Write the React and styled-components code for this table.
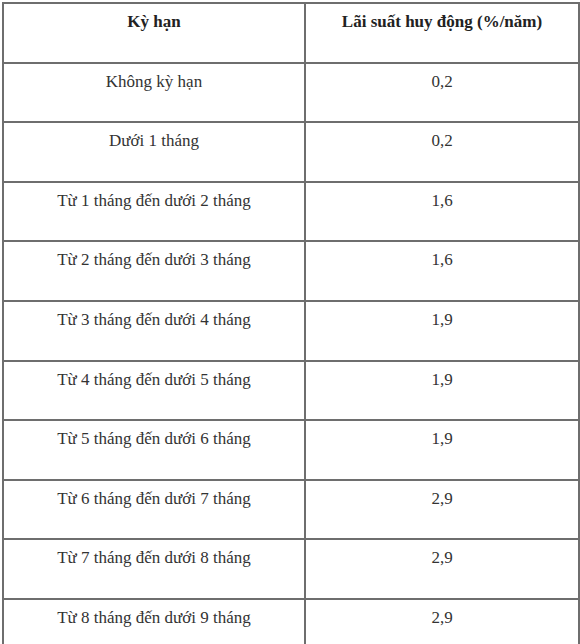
import React from 'react';
import styled, { createGlobalStyle } from 'styled-components';

const GlobalStyle = createGlobalStyle`
    html, body {
        margin: 0;
        padding: 0;
        background: #fff;
        overflow: hidden;
    }
`

const Page = styled.div`
    padding: 2px 0 0 2px;
    width: 580px;
    height: 644px;
    box-sizing: border-box;
    overflow: hidden;
`

const Table = styled.table`
    width: 576px;
    border-collapse: collapse;
    table-layout: fixed;
    font-family: "Liberation Serif", "Times New Roman", serif;
    font-size: 17px;
    color: #333;
`

const Cell = styled.td`
    border: 2px solid #6e6e6e;
    height: 59.6px;
    box-sizing: border-box;
    padding: 8px 4px 0;
    vertical-align: top;
    text-align: center;
    line-height: 20px;
    font-weight: ${p => (p.$head ? 700 : 400)};
    color: ${p => (p.$head ? '#222' : '#333')};
`

const rates = [
    { term: 'Không kỳ hạn', rate: '0,2' },
    { term: 'Dưới 1 tháng', rate: '0,2' },
    { term: 'Từ 1 tháng đến dưới 2 tháng', rate: '1,6' },
    { term: 'Từ 2 tháng đến dưới 3 tháng', rate: '1,6' },
    { term: 'Từ 3 tháng đến dưới 4 tháng', rate: '1,9' },
    { term: 'Từ 4 tháng đến dưới 5 tháng', rate: '1,9' },
    { term: 'Từ 5 tháng đến dưới 6 tháng', rate: '1,9' },
    { term: 'Từ 6 tháng đến dưới 7 tháng', rate: '2,9' },
    { term: 'Từ 7 tháng đến dưới 8 tháng', rate: '2,9' },
    { term: 'Từ 8 tháng đến dưới 9 tháng', rate: '2,9' },
]

function App() {
    return (
        <Page>
            <GlobalStyle/>
            <Table>
                <colgroup>
                    <col style={{ width: '302px' }}/>
                    <col style={{ width: '274px' }}/>
                </colgroup>
                <thead>
                    <tr>
                        <Cell as="th" $head>Kỳ hạn</Cell>
                        <Cell as="th" $head>Lãi suất huy động (%/năm)</Cell>
                    </tr>
                </thead>
                <tbody>
                    {rates.map(r => (
                        <tr key={r.term}>
                            <Cell>{r.term}</Cell>
                            <Cell>{r.rate}</Cell>
                        </tr>
                    ))}
                </tbody>
            </Table>
        </Page>
    )
}

export default App;
